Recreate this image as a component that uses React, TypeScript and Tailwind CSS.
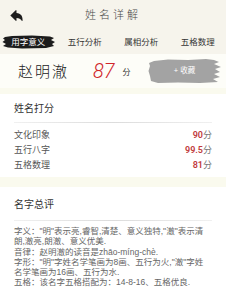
import { IoArrowUndo } from "react-icons/io5";

const FONT = { fontFamily: '"Liberation Sans", "Noto Sans CJK SC", sans-serif' };

const tabs = ["用字意义", "五行分析", "属相分析", "五格数理"];

const scores = [
  { label: "文化印象", value: "90" },
  { label: "五行八字", value: "99.5" },
  { label: "五格数理", value: "81" },
];

const summary = [
  '字义："明"表示亮,睿智,清楚、意义独特,"澈"表示清',
  "朗,澈亮,朗澈、意义优美.",
  "音律：赵明澈的读音是zhāo-míng-chè.",
  '字形："明"字姓名学笔画为8画、五行为火,"澈"字姓',
  "名学笔画为16画、五行为水.",
  "五格：该名字五格搭配为：14-8-16、五格优良.",
];

// 毛笔刷子背景
function BlackBrush() {
  return (
    <svg className="absolute left-[2px] top-[5px]" width="54" height="14" viewBox="0 0 54 14">
      <path
        d="M3 2 L10 1 L30 0.5 L48 1.5 L52 3 L49 5 L53 7 L50 9 L52 11 L44 13 L20 13.5 L6 12.5 L1 11 L4 9 L0.5 7 L3 5 L1 3.5 Z"
        fill="#1c1c1c"
      />
    </svg>
  );
}

function GrayBrush() {
  return (
    <svg className="absolute inset-0" width="74" height="26" viewBox="0 0 74 26">
      <path
        d="M6 3 L20 1.5 L40 2 L58 1 L66 2 L71 4 L66 6 L73 9 L67 11 L72 14 L66 16 L72 19 L65 21 L70 24 L52 25 L30 24.5 L10 25 L3 23 L2 18 L0.5 13 L2 8 L1 5 Z"
        fill="#a3a3a3"
      />
    </svg>
  );
}

function Divider() {
  return <div className="h-px bg-gradient-to-r from-[#f0f0f0] via-[#dcdcdc] to-[#f0f0f0]" />;
}

export default function App() {
  return (
    <div className="w-[226px] h-[288px] overflow-hidden bg-[#fafaee]" style={FONT}>
      {/* 顶部 */}
      <div className="bg-[#f6f4ec]">
        <div className="relative h-[30px] flex items-center justify-center">
          <IoArrowUndo className="absolute left-[9px] top-[8px] text-[#1e1e1e]" size={15} />
          <span className="text-[11px] tracking-[3px] text-[#4a4a4a] font-light">姓名详解</span>
        </div>
        <div className="grid grid-cols-4 h-[24px]">
          {tabs.map((t, i) => (
            <div key={t} className="relative flex items-center justify-center">
              {i === 0 && <BlackBrush />}
              <span
                className={`relative text-[8.5px] leading-none ${i === 0 ? "text-white" : "text-[#333]"}`}
              >
                {t}
              </span>
            </div>
          ))}
        </div>
      </div>

      {/* 名字 + 分数 */}
      <div className="h-[34px] bg-[#fdfdf8] flex items-center">
        <span className="ml-[18px] text-[15px] tracking-[2px] text-[#222] font-light leading-none">
          赵明澈
        </span>
        <span
          className="ml-[24px] text-[20px] italic font-light text-[#d0262a] leading-none"
          style={{ fontFamily: "Roboto, sans-serif" }}
        >
          87
        </span>
        <span className="ml-[8px] mt-[3px] text-[8px] text-[#333]">分</span>
        <div className="relative ml-[17px] w-[74px] h-[26px] flex items-center justify-center">
          <GrayBrush />
          <span className="relative text-[7.5px] text-white">+ 收藏</span>
        </div>
      </div>

      <div className="h-[6px]" />

      {/* 姓名打分 */}
      <div className="bg-white px-[14px] pt-[8px] pb-[4px]">
        <div className="text-[10px] leading-[14px] text-[#333]">姓名打分</div>
        <div className="mt-[6px]">
          <Divider />
        </div>
        <div className="mt-[5px]">
          {scores.map((s) => (
            <div key={s.label} className="h-[15px] flex items-center justify-between text-[9px]">
              <span className="text-[#555]">{s.label}</span>
              <span>
                <span
                  className="text-[#c0393b] font-semibold"
                  style={{ fontFamily: "Roboto, sans-serif" }}
                >
                  {s.value}
                </span>
                <span className="text-[#777]">分</span>
              </span>
            </div>
          ))}
        </div>
      </div>

      <div className="h-[10px]" />

      {/* 名字总评 */}
      <div className="bg-white px-[14px] pt-[11px] h-[110px]">
        <div className="text-[10px] leading-[14px] text-[#333]">名字总评</div>
        <div className="mt-[8px]">
          <Divider />
        </div>
        <div className="mt-[5px] text-[8.5px] leading-[10.3px] text-[#666]">
          {summary.map((line) => (
            <div key={line} className="whitespace-nowrap">
              {line}
            </div>
          ))}
        </div>
      </div>
    </div>
  );
}
